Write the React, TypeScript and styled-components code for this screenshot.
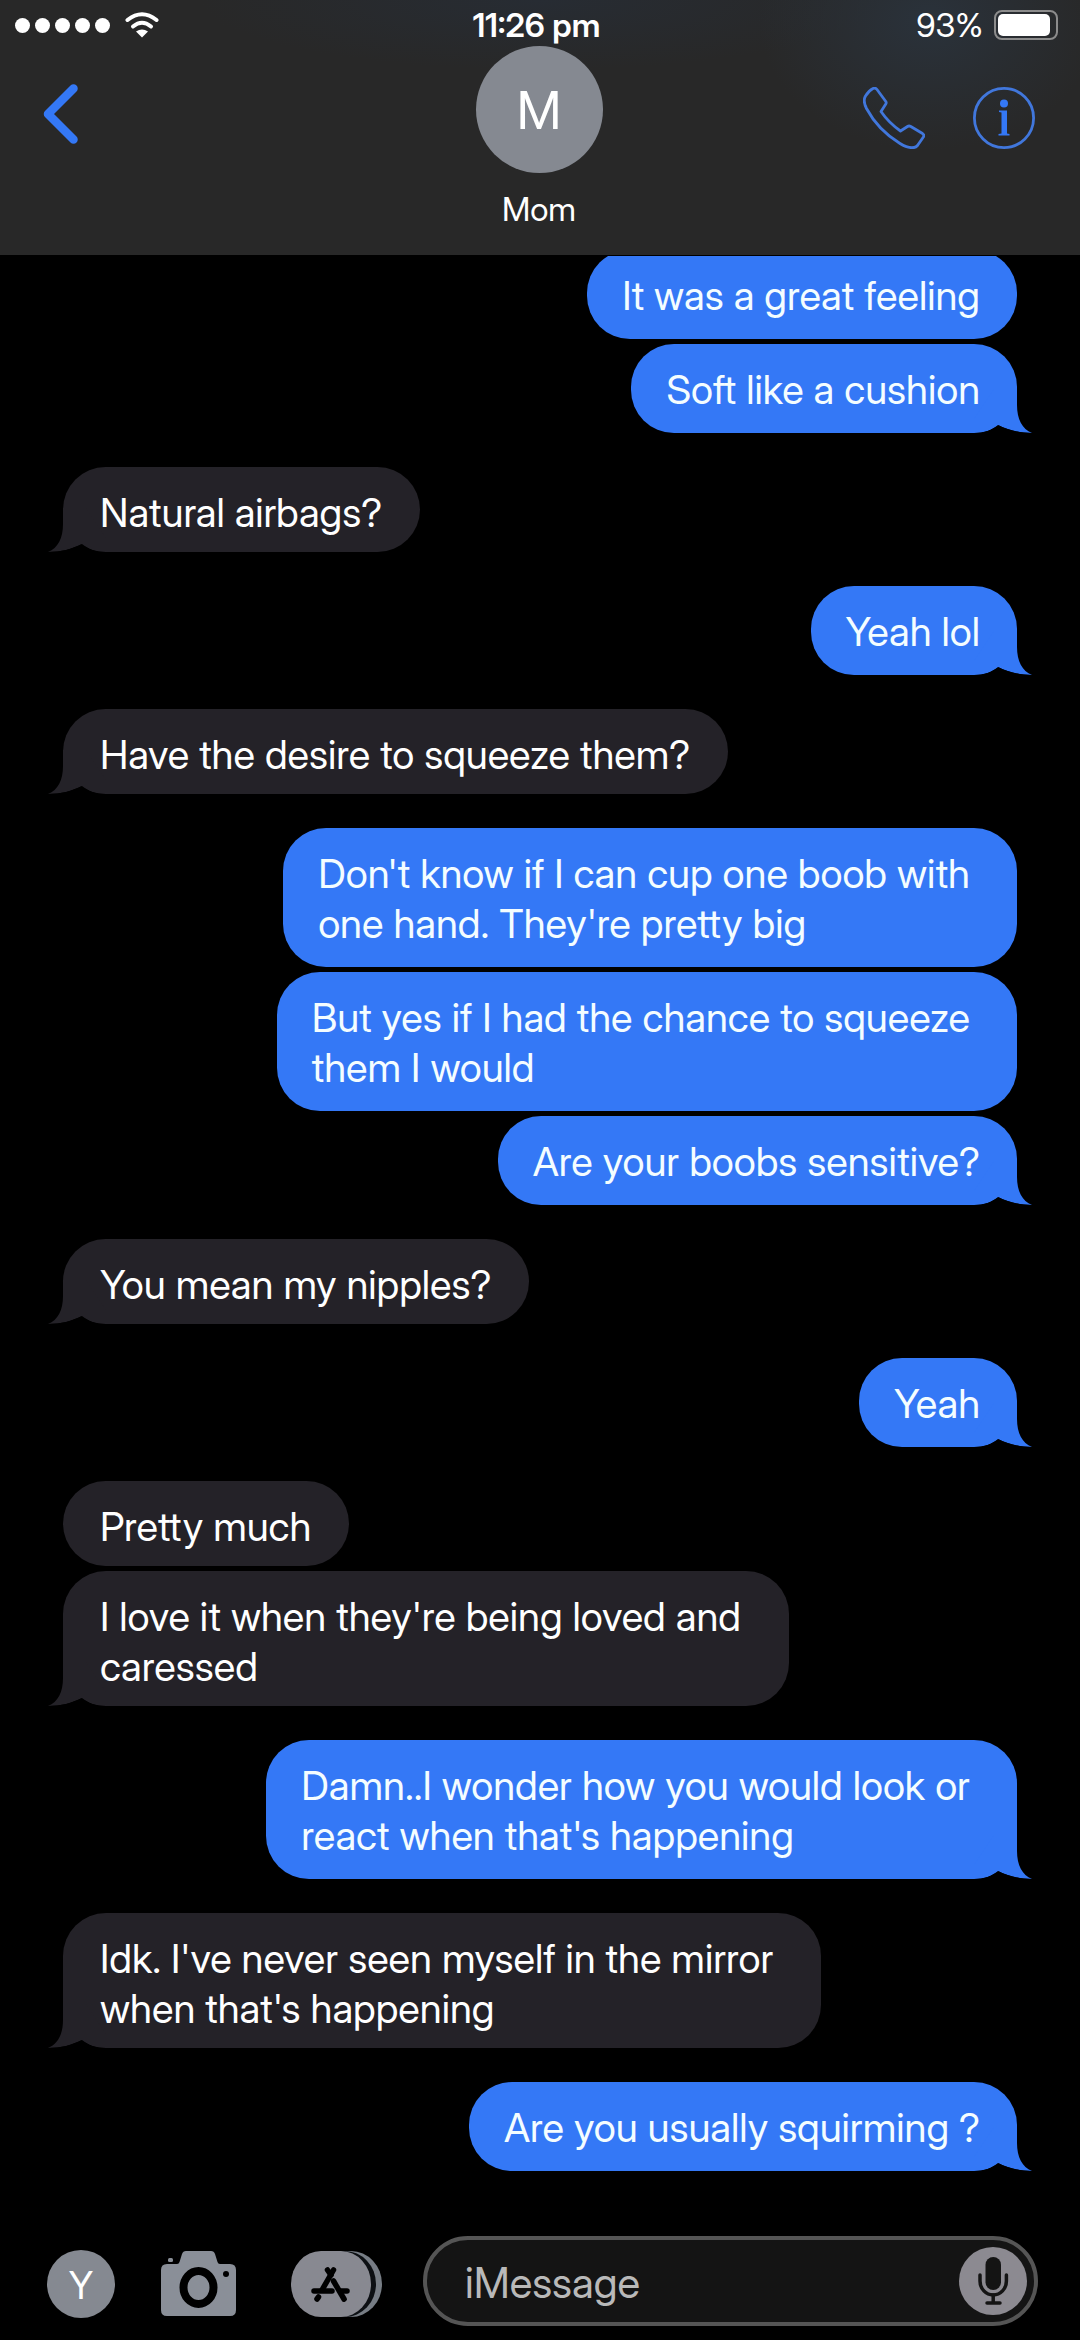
import React from "react";
import styled, { createGlobalStyle, css } from "styled-components";

const GlobalStyle = createGlobalStyle`
  *, *::before, *::after { box-sizing: border-box; }
  body {
    margin: 0;
    background: #000;
    color: #fff;
    font-family: "Inter Display", Inter, "Liberation Sans", sans-serif;
  }
  button { border: 0; padding: 0; background: none; color: inherit; font: inherit; cursor: pointer; }
  svg { display: block; }
`;

const Screen = styled.div`
  display: flex;
  flex-direction: column;
  height: 100vh;
  overflow: hidden;
`;

const Header = styled.header`
  flex: none;
  padding-bottom: 21px;
  background:
    radial-gradient(ellipse 170px 130px at 86% 8%, #2a323b 0%, transparent 100%),
    radial-gradient(ellipse 340px 70px at 50% 0, #272c33 0%, transparent 100%),
    #282828;
`;

const StatusBar = styled.div`
  display: grid;
  grid-template-columns: 1fr auto 1fr;
  align-items: center;
  height: 46px;
  padding: 4px 22px 0 15px;
  font-size: 33px;
  line-height: 40px;
`;

const Signal = styled.div`
  display: flex;
  align-items: center;
  gap: 5px;
`;

const Dot = styled.span`
  width: 15px;
  height: 15px;
  border-radius: 50%;
  background: #fff;
`;

const WifiIcon = styled.svg`
  margin-left: 10px;
`;

const Time = styled.span`
  font-weight: 600;
`;

const Power = styled.div`
  display: flex;
  justify-content: flex-end;
  align-items: center;
  gap: 11px;
`;

const Battery = styled.span`
  display: flex;
  width: 64px;
  height: 30px;
  padding: 2px;
  border: 2px solid #8c8c8c;
  border-radius: 8px;
`;

const Charge = styled.span<{ $level: number }>`
  width: ${(p) => p.$level}%;
  border-radius: 5px;
  background: #fff;
`;

const NavBar = styled.nav`
  display: grid;
  grid-template-columns: 1fr auto 1fr;
  padding: 0 45px 0 43px;
`;

const BackButton = styled.button`
  justify-self: start;
  align-self: start;
  margin-top: 38px;
`;

const Actions = styled.div`
  display: flex;
  justify-content: flex-end;
  align-items: flex-start;
  gap: 48px;
  padding-top: 41px;
`;

const Contact = styled.div`
  display: flex;
  flex-direction: column;
  align-items: center;
  gap: 11px;
`;

const Avatar = styled.span<{ $size: number; $font: number }>`
  display: flex;
  flex: none;
  align-items: center;
  justify-content: center;
  width: ${(p) => p.$size}px;
  height: ${(p) => p.$size}px;
  padding-top: 2px;
  border-radius: 50%;
  background: #858991;
  font-size: ${(p) => p.$font}px;
`;

const ContactName = styled.h1`
  margin: 0;
  font-size: 33px;
  font-weight: 400;
  line-height: 50px;
`;

const Thread = styled.main`
  display: flex;
  flex: 1;
  flex-direction: column;
  justify-content: flex-end;
  gap: 34px;
  min-height: 0;
  margin-top: 1px;
  padding: 0 63px 65px;
  overflow: hidden;
`;

const Group = styled.section<{ $mine: boolean }>`
  display: flex;
  flex: none;
  flex-direction: column;
  align-items: ${(p) => (p.$mine ? "flex-end" : "flex-start")};
  gap: 5px;
`;

const Bubble = styled.p<{ $mine: boolean }>`
  position: relative;
  margin: 0;
  border-radius: 43px;
  font-size: 40px;
  line-height: 50px;
  white-space: pre;
  ${(p) =>
    p.$mine
      ? css`
          padding: 21px 37px 18px 35px;
          background: #3478f6;
          color: #f4fdff;
        `
      : css`
          padding: 21px 38px 14px 37px;
          background: #242228;
          color: #fff;
        `}
`;

const Tail = styled.svg<{ $mine: boolean }>`
  position: absolute;
  bottom: 0;
  ${(p) =>
    p.$mine
      ? css`
          right: -15px;
        `
      : css`
          left: -15px;
          transform: scaleX(-1);
        `}
`;

const Composer = styled.form`
  display: flex;
  flex: none;
  align-items: center;
  padding: 0 42px 14px 47px;
`;

const IconButton = styled.button<{ $gap: number }>`
  flex: none;
  margin-top: 6px;
  margin-right: ${(p) => p.$gap}px;
`;

const Field = styled.div`
  display: flex;
  flex: 1;
  align-items: center;
  min-width: 0;
  height: 90px;
  padding: 0 7px 0 38px;
  border: 4px solid #555;
  border-radius: 45px;
  background: #141414;
`;

const TextInput = styled.input`
  flex: 1;
  min-width: 0;
  padding: 4px 0 0;
  border: 0;
  outline: 0;
  background: none;
  color: #fff;
  font: inherit;
  font-size: 42px;
  line-height: 50px;
  &::placeholder { color: #b9b9b9; opacity: 1; }
`;

type MessageGroup = { mine: boolean; texts: string[] };

const groups: MessageGroup[] = [
  { mine: true, texts: ["It was a great feeling", "Soft like a cushion"] },
  { mine: false, texts: ["Natural airbags?"] },
  { mine: true, texts: ["Yeah lol"] },
  { mine: false, texts: ["Have the desire to squeeze them?"] },
  {
    mine: true,
    texts: [
      "Don't know if I can cup one boob with \none hand. They're pretty big",
      "But yes if I had the chance to squeeze \nthem I would",
      "Are your boobs sensitive?",
    ],
  },
  { mine: false, texts: ["You mean my nipples?"] },
  { mine: true, texts: ["Yeah"] },
  { mine: false, texts: ["Pretty much", "I love it when they're being loved and \ncaressed"] },
  { mine: true, texts: ["Damn..I wonder how you would look or \nreact when that's happening"] },
  { mine: false, texts: ["Idk. I've never seen myself in the mirror \nwhen that's happening"] },
  { mine: true, texts: ["Are you usually squirming ?"] },
];

function BubbleTail({ mine }: { mine: boolean }) {
  return (
    <Tail $mine={mine} width="58" height="44" viewBox="0 0 58 44" aria-hidden="true">
      <path d="M0 44C10 44 18 41 24 36C34 41 45 44 58 44C48 40 43 30 43 16V0H20L0 30Z" fill={mine ? "#3478f6" : "#242228"} />
      <path d="M0 44C10 44 18 41 24 36C34 41 45 44 58 44Z" fill="#000" />
    </Tail>
  );
}

export default function App() {
  return (
    <Screen>
      <GlobalStyle />
      <Header>
        <StatusBar>
          <Signal>
            {[0, 1, 2, 3, 4].map((i) => (
              <Dot key={i} />
            ))}
            <WifiIcon width="34" height="26" viewBox="0 0 34 26" aria-hidden="true">
              <g fill="none" stroke="#fff" strokeWidth="4" strokeLinecap="round">
                <path d="M2.5 8Q17-3.5 31.5 8" />
                <path d="M8 14.5Q17 7 26 14.5" />
              </g>
              <path d="M11 19.5Q17 15.500 23 19.500L17 25.500Z" fill="#fff" />
            </WifiIcon>
          </Signal>
          <Time>11:26 pm</Time>
          <Power>
            <span>93%</span>
            <Battery>
              <Charge $level={92} />
            </Battery>
          </Power>
        </StatusBar>
        <NavBar>
          <BackButton aria-label="Back">
            <svg width="35" height="60" viewBox="0 0 35 60">
              <path d="M30.500 4.500L5 30L30.500 55.500" fill="none" stroke="#3478f6" strokeWidth="8.500" strokeLinecap="round" strokeLinejoin="round" />
            </svg>
          </BackButton>
          <Contact>
            <Avatar $size={127} $font={52}>M</Avatar>
            <ContactName>Mom</ContactName>
          </Contact>
          <Actions>
            <button aria-label="Call">
              <svg width="62" height="62" viewBox="0 0 62 62">
                <path
                  d="M10 1.500Q12.500 .500 14 2.500L22.800 14.500Q23.600 15.800 22.800 17L18 24.500Q25.500 35.500 37.500 44L44.500 39.500Q46 38.500 47.800 39.500L59.500 46.500Q61.500 48 60.400 50L54.500 58.500Q53 60.300 51 60.500Q45 61.500 37 56.500Q15 43 3.500 21.500Q1 16.500 1.300 13Q1.300 11 2.500 9Q6 3.500 10 1.500Z"
                  fill="none"
                  stroke="#4177dc"
                  strokeWidth="2.800"
                  strokeLinejoin="round"
                />
              </svg>
            </button>
            <button aria-label="Details">
              <svg width="62" height="62" viewBox="0 0 62 62">
                <circle cx="31" cy="31" r="29.600" fill="none" stroke="#4177dc" strokeWidth="2.800" />
                <circle cx="31" cy="16.500" r="4" fill="#3478f6" />
                <path d="M26 23.500H34V46.500L36.500 47V48.500H25.500V47L28.500 46.500V25.500L26 25Z" fill="#3478f6" />
              </svg>
            </button>
          </Actions>
        </NavBar>
      </Header>

      <Thread>
        {groups.map((group, g) => (
          <Group key={g} $mine={group.mine}>
            {group.texts.map((text, i) => (
              <Bubble key={text} $mine={group.mine}>
                {i === group.texts.length - 1 && <BubbleTail mine={group.mine} />}
                {text}
              </Bubble>
            ))}
          </Group>
        ))}
      </Thread>

      <Composer onSubmit={(e) => e.preventDefault()}>
        <IconButton type="button" $gap={46} aria-label="Profile">
          <Avatar $size={68} $font={38}>Y</Avatar>
        </IconButton>
        <IconButton type="button" $gap={55} aria-label="Camera">
          <svg width="75" height="66" viewBox="0 0 75 66">
            <path d="M6 13H16Q18 13 18.500 11L21 3Q22 0 25 0H50Q53 0 54 3L56.500 11Q57 13 59 13H69Q75 13 75 19V59Q75 65 69 65H6Q0 65 0 59V19Q0 13 6 13Z" fill="#8a8f98" />
            <rect x="7" y="7" width="5" height="4" rx="1.500" fill="#8a8f98" />
            <ellipse cx="37.500" cy="36.500" rx="15" ry="16.500" fill="none" stroke="#000" strokeWidth="8" />
            <circle cx="65" cy="23" r="3" fill="#000" />
          </svg>
        </IconButton>
        <IconButton type="button" $gap={41} aria-label="Apps">
          <svg width="91" height="66" viewBox="0 0 91 66">
            <path d="M50 0H60A31 33 0 0 1 60 66H50Z" fill="#777d85" />
            <path d="M45 0H54A31 33 0 0 1 54 66H45Z" fill="#0d1014" />
            <path d="M30 0H50A30 33 0 0 1 50 66H30A30 33 0 0 1 30 0Z" fill="#888991" />
            <g fill="none" stroke="#000" strokeWidth="5.500" strokeLinecap="round">
              <path d="M36.500 19L40 24" />
              <path d="M42.500 19L31 39" />
              <path d="M23 40H41" />
              <path d="M50 40H56" />
              <path d="M42.500 30L53 48" />
              <path d="M27.500 46L26 48" />
            </g>
          </svg>
        </IconButton>
        <Field>
          <TextInput type="text" placeholder="iMessage" aria-label="iMessage" />
          <button type="button" aria-label="Dictate">
            <svg width="68" height="68" viewBox="0 0 68 68">
              <circle cx="34" cy="34" r="34" fill="#8c8a91" />
              <rect x="26.500" y="10" width="15.500" height="33" rx="7.750" fill="#141414" />
              <g fill="none" stroke="#141414" strokeWidth="3.500" strokeLinecap="round">
                <path d="M21 28V34A13.200 14 0 0 0 47.400 34V28" />
                <path d="M34.200 48V55" />
                <path d="M28 56H41" />
              </g>
            </svg>
          </button>
        </Field>
      </Composer>
    </Screen>
  );
}
